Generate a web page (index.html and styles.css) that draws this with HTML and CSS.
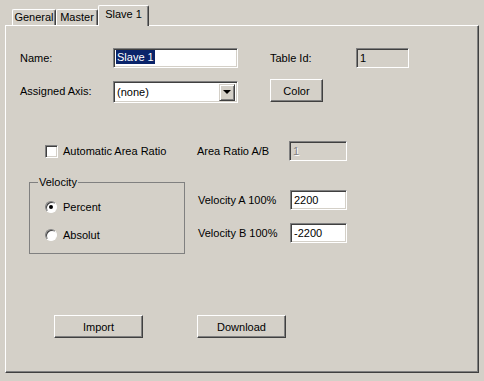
FILE: index.html
```html
<!DOCTYPE html>
<html lang="en">
<head>
    <meta charset="UTF-8">
    <title>Slave 1</title>
    <link rel="stylesheet" href="styles.css">
</head>
<body>
    <div class="window">
        <div class="tabs">
            <div class="tab tab-general">General</div>
            <div class="tab tab-master">Master</div>
            <div class="tab tab-slave active">Slave 1</div>
        </div>

        <div class="panel">
            <div class="row row-name">
                <span class="label label-left">Name:</span>
                <div class="field field-name"><span class="selected-text">Slave 1</span></div>
                <span class="label label-table">Table Id:</span>
                <div class="field field-table readonly">1</div>
            </div>

            <div class="row row-axis">
                <span class="label label-left">Assigned Axis:</span>
                <div class="field combo">
                    <span class="combo-text">(none)</span>
                    <span class="combo-arrow"><span class="triangle"></span></span>
                </div>
                <button class="btn btn-color">Color</button>
            </div>

            <div class="row row-ratio">
                <label class="check">
                    <span class="checkbox"></span>
                    <span>Automatic Area Ratio</span>
                </label>
                <span class="label label-right">Area Ratio A/B</span>
                <div class="field field-small disabled">1</div>
            </div>

            <div class="velocity-section">
                <fieldset class="group">
                    <legend>Velocity</legend>
                    <label class="radio-item">
                        <span class="radio checked"></span>
                        <span>Percent</span>
                    </label>
                    <label class="radio-item">
                        <span class="radio"></span>
                        <span>Absolut</span>
                    </label>
                </fieldset>

                <div class="velocity-fields">
                    <div class="vel-row">
                        <span class="label label-right">Velocity A 100%</span>
                        <div class="field field-small">2200</div>
                    </div>
                    <div class="vel-row">
                        <span class="label label-right">Velocity B 100%</span>
                        <div class="field field-small">-2200</div>
                    </div>
                </div>
            </div>

            <div class="row row-buttons">
                <button class="btn btn-wide btn-import">Import</button>
                <button class="btn btn-wide btn-download">Download</button>
            </div>
        </div>
    </div>
</body>
</html>
```

FILE: styles.css
```css
* {
    box-sizing: border-box;
    margin: 0;
    padding: 0;
}

body {
    font-family: "Liberation Sans", Arial, sans-serif;
    font-size: 11px;
    color: #000;
    background: #d4d0c8;
    width: 484px;
    height: 381px;
    overflow: hidden;
}

.window {
    padding: 5px 0 0 5px;
}

/* tab strip */
.tabs {
    display: flex;
    align-items: flex-end;
    height: 20px;
    padding-left: 7px;
    position: relative;
    z-index: 2;
}

.tab {
    height: 16px;
    display: flex;
    align-items: center;
    justify-content: center;
    background: #d4d0c8;
    border-top: 1px solid #fff;
    border-left: 1px solid #fff;
    border-right: 1px solid #404040;
    box-shadow: inset -1px 0 0 #808080;
    border-radius: 2px 2px 0 0;
    padding-bottom: 1px;
}

.tab-general {
    width: 44px;
}

.tab-master {
    width: 42px;
}

.tab.active {
    width: 51px;
    height: 21px;
    margin-bottom: -1px;
    padding-bottom: 4px;
}

.panel {
    width: 474px;
    height: 348px;
    border-top: 1px solid #fff;
    border-left: 1px solid #fff;
    border-right: 1px solid #404040;
    border-bottom: 1px solid #404040;
    box-shadow: inset -1px -1px 0 #808080;
}

/* rows */
.row {
    display: flex;
    align-items: center;
}

.row-name {
    margin-top: 22px;
    height: 20px;
    padding-left: 14px;
}

.row-axis {
    margin-top: 11px;
    height: 23px;
    padding-left: 14px;
    align-items: flex-start;
}

.row-axis .label-left {
    line-height: 20px;
    margin-top: 2px;
}

.row-ratio {
    margin-top: 39px;
    height: 20px;
    padding-left: 39px;
}

.label-left {
    width: 93px;
}

.label-table {
    width: 86px;
    margin-left: 32px;
}

.label-right {
    width: 92px;
}

/* sunken fields */
.field {
    height: 20px;
    background: #fff;
    border: 1px solid;
    border-color: #808080 #fff #fff #808080;
    box-shadow: inset 1px 1px 0 #404040, inset -1px -1px 0 #d4d0c8;
    padding: 0 3px;
    line-height: 18px;
    white-space: nowrap;
}

.field-name {
    width: 125px;
    padding-left: 2px;
}

.selected-text {
    display: inline-block;
    background: #0a246a;
    color: #fff;
    line-height: 14px;
    padding: 0 1px;
    vertical-align: 1px;
}

.field-table {
    width: 53px;
}

.readonly {
    background: #d4d0c8;
}

.field-small {
    width: 58px;
}

.disabled {
    background: #d4d0c8;
    color: #808080;
    text-shadow: 1px 1px 0 #fff;
}

/* combo box */
.combo {
    width: 125px;
    height: 22px;
    margin-top: 2px;
    display: flex;
    align-items: center;
    justify-content: space-between;
    padding: 2px 2px 2px 3px;
}

.combo-arrow {
    width: 16px;
    height: 17px;
    background: #d4d0c8;
    border: 1px solid;
    border-color: #d4d0c8 #404040 #404040 #d4d0c8;
    box-shadow: inset 1px 1px 0 #fff, inset -1px -1px 0 #808080;
    display: flex;
    align-items: center;
    justify-content: center;
}

.triangle {
    width: 0;
    height: 0;
    border-left: 4px solid transparent;
    border-right: 4px solid transparent;
    border-top: 4px solid #000;
}

/* raised buttons */
.btn {
    font: inherit;
    color: #000;
    background: #d4d0c8;
    border: 1px solid;
    border-color: #fff #404040 #404040 #fff;
    box-shadow: inset -1px -1px 0 #808080;
    height: 23px;
}

.btn-color {
    width: 53px;
    margin-left: 32px;
}

/* checkbox */
.check {
    display: flex;
    align-items: center;
    gap: 5px;
    width: 152px;
}

.checkbox {
    width: 13px;
    height: 13px;
    background: #fff;
    border: 1px solid;
    border-color: #808080 #fff #fff #808080;
    box-shadow: inset 1px 1px 0 #404040, inset -1px -1px 0 #d4d0c8;
}

/* velocity group */
.velocity-section {
    display: flex;
    align-items: flex-start;
    margin-top: 15px;
}

.group {
    width: 156px;
    height: 78px;
    margin-left: 23px;
    border: 1px solid #808080;
    padding: 11px 0 0 15px;
}

.group legend {
    padding: 0 1px;
    margin-left: -7px;
    line-height: 13px;
}

.radio-item {
    display: flex;
    align-items: center;
    gap: 6px;
    height: 14px;
    margin-bottom: 14px;
}

.radio {
    width: 12px;
    height: 12px;
    border-radius: 50%;
    background: #fff;
    border: 1px solid;
    border-color: #808080 #fff #fff #808080;
    box-shadow: inset 1px 1px 0 #404040;
    display: flex;
    align-items: center;
    justify-content: center;
}

.radio.checked::after {
    content: "";
    width: 4px;
    height: 4px;
    border-radius: 50%;
    background: #000;
}

.velocity-fields {
    margin-left: 13px;
    padding-top: 14px;
    display: flex;
    flex-direction: column;
    gap: 13px;
}

.vel-row {
    display: flex;
    align-items: center;
    height: 20px;
}

.vel-row .field-small {
    width: 57px;
}

/* bottom buttons */
.row-buttons {
    margin-top: 61px;
    padding-left: 48px;
}

.btn-wide {
    width: 89px;
}

.btn-download {
    margin-left: 54px;
}
```
